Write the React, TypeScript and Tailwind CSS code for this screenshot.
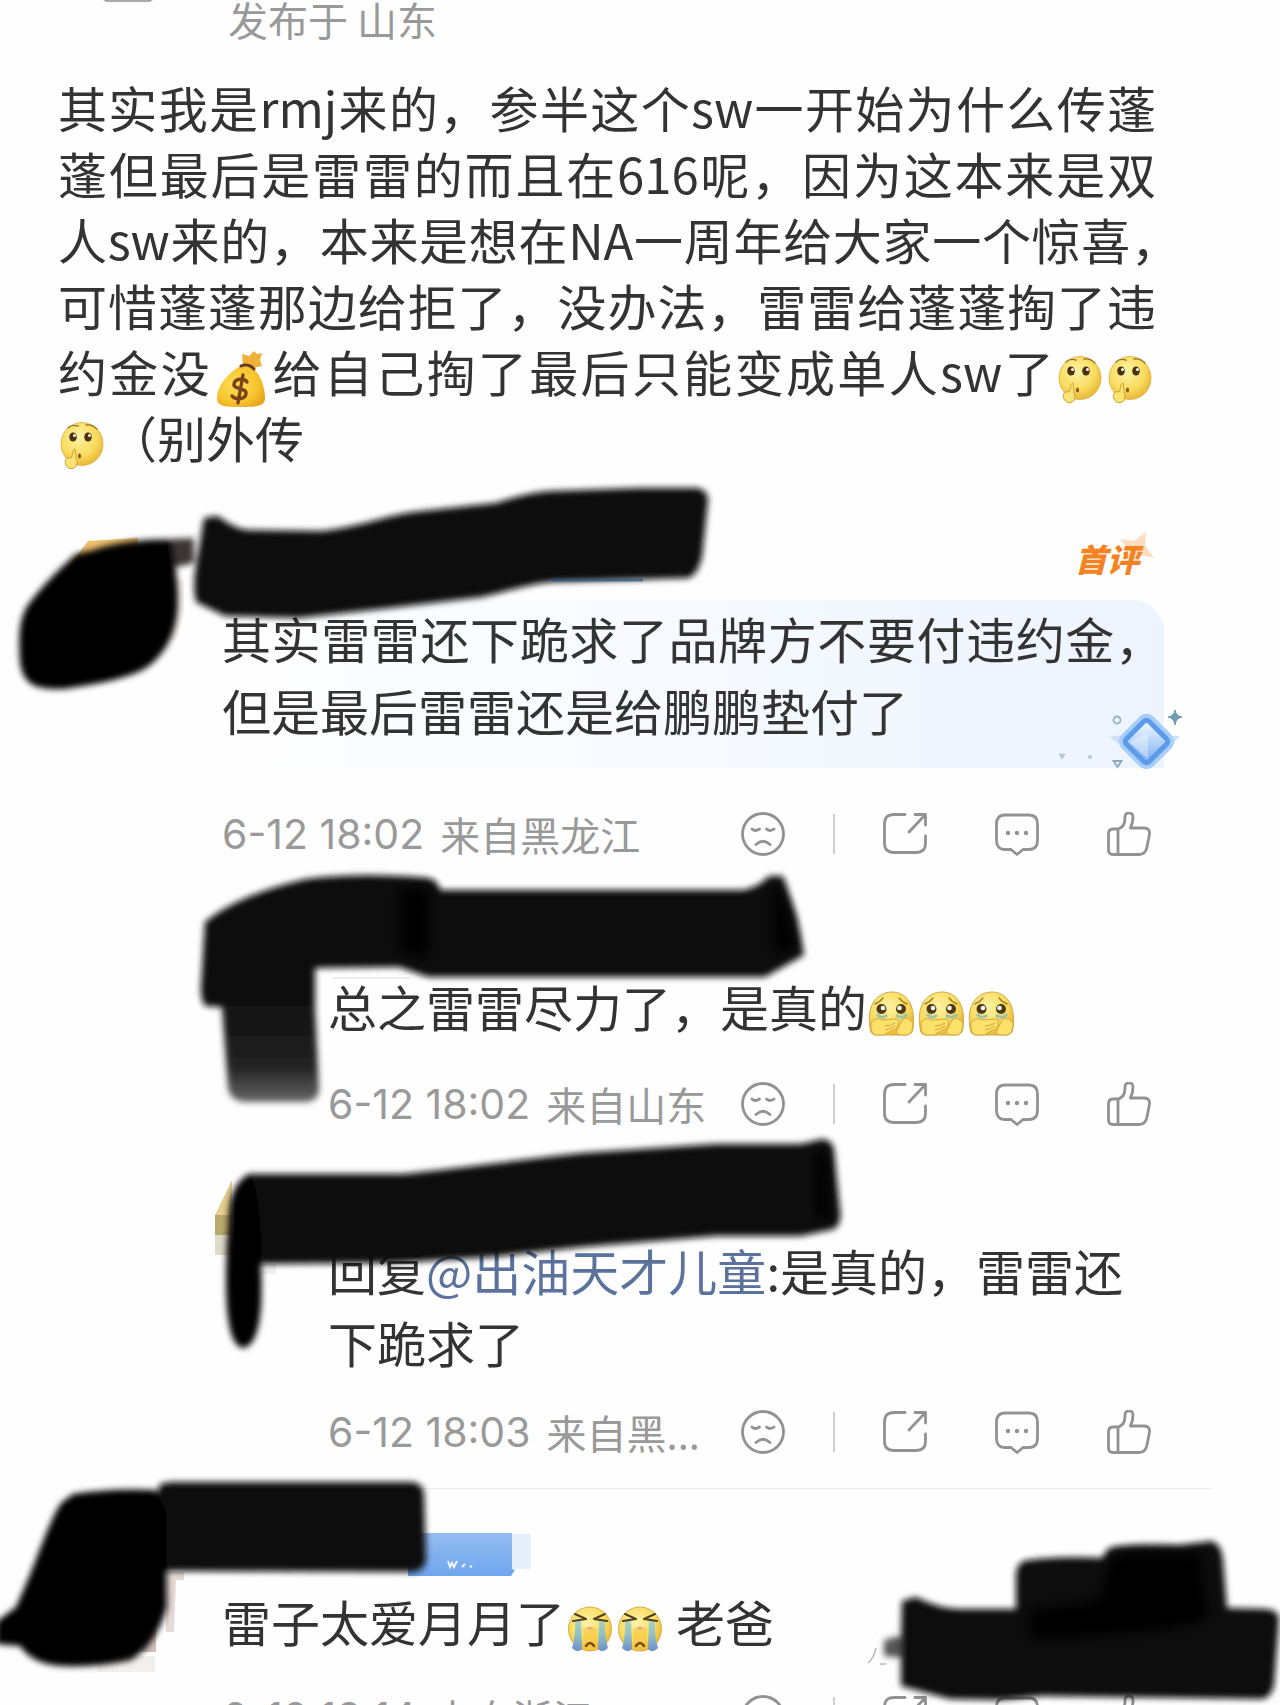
import React from 'react';

function MoneyBag() {
  return (
    <svg viewBox="0 0 50 60" className="inline-block h-[60px] w-[50px] align-middle" role="img" aria-label="钱袋">
      <defs>
        <radialGradient id="bag" cx="40%" cy="45%" r="65%">
          <stop offset="0" stopColor="#fde05a" />
          <stop offset="0.7" stopColor="#f7c32c" />
          <stop offset="1" stopColor="#e9a41c" />
        </radialGradient>
      </defs>
      <path d="M26 5 L33 7 L38 2 L41 5 L46 4 L44 11 L46 17 L37 19 L27 16 Z" fill="#efb13a" />
      <path d="M25 17 C14 22 1 36 1 49 C1 57 8 58 24 58 C42 58 49 57 49 49 C49 38 44 25 37 19 Z" fill="url(#bag)" />
      <path d="M25 17 C29 15 35 16 38 20" stroke="#6b3a1b" strokeWidth="3" fill="none" strokeLinecap="round" />
      <path d="M31 33 C29 29 19 29 18 35 C17 41 31 38 30 45 C29 51 19 51 16 47 M27 26 L22 54" stroke="#7b4417" strokeWidth="3.4" fill="none" strokeLinecap="round" />
    </svg>
  );
}

function FaceDefs() {
  return (
    <defs>
      <radialGradient id="face" cx="42%" cy="35%" r="65%">
        <stop offset="0" stopColor="#fdf3a8" />
        <stop offset="0.65" stopColor="#f9dc5e" />
        <stop offset="1" stopColor="#eab83a" />
      </radialGradient>
      <linearGradient id="tear" x1="0" y1="0" x2="0" y2="1">
        <stop offset="0" stopColor="#a9d5c4" />
        <stop offset="0.5" stopColor="#8fbfc4" />
        <stop offset="1" stopColor="#6f8fc8" />
      </linearGradient>
    </defs>
  );
}

function Hush() {
  return (
    <svg viewBox="0 0 50 50" className="inline-block size-[50px] align-middle" role="img" aria-label="思考">
      <FaceDefs />
      <ellipse cx="24" cy="24" rx="21" ry="21.500" fill="url(#face)" stroke="#d9ad3c" strokeWidth="0.8" />
      <path d="M10 8 Q14 4 20 6 M28 5 Q34 4 39 9" stroke="#9a7426" strokeWidth="1.4" fill="none" strokeLinecap="round" />
      <ellipse cx="15" cy="17" rx="3.800" ry="4.600" fill="#4d3010" />
      <ellipse cx="30" cy="17" rx="3.800" ry="4.600" fill="#4d3010" />
      <circle cx="16.500" cy="15.400" r="1.500" fill="#fff" />
      <circle cx="31.500" cy="15.400" r="1.500" fill="#fff" />
      <ellipse cx="21.500" cy="36" rx="1.600" ry="2.600" fill="#8c5a1a" />
      <path d="M17 29 C14 29 15 36 13 38 C8 37 6 40 8 45 C10 50 18 50 19 44 C20 41 17 39 18 36 Z" fill="#fbe373" stroke="#cf9f37" strokeWidth="1" />
    </svg>
  );
}

function Moved() {
  return (
    <svg viewBox="0 0 50 50" className="inline-block size-[50px] align-middle" role="img" aria-label="感动">
      <FaceDefs />
      <path d="M3 38 C-1 14 12 3 25 3 C38 3 49 14 46 38 C46 44 43 46 38 46 L9 46 C5 46 3 43 3 38 Z" fill="url(#face)" stroke="#c9ac4c" strokeWidth="1" />
      <path d="M8 15 Q13 13 16 9 M32 9 Q35 13 40 15" stroke="#a57b22" strokeWidth="1.4" fill="none" strokeLinecap="round" />
      <path d="M10 25 Q15 31 20 26 M29 26 Q35 31 40 25" stroke="#9cc3a8" strokeWidth="3" fill="none" />
      <circle cx="14.500" cy="20" r="5" fill="#4f3912" />
      <circle cx="34" cy="20" r="5" fill="#4f3912" />
      <circle cx="16" cy="19" r="2.300" fill="#fff" />
      <circle cx="32.500" cy="19" r="2.300" fill="#fff" />
      <path d="M4 34 Q9 27 15 31 L27 30 Q34 30 31 34 Q32 39 26 41 L17 46 L9 46 Q3 45 4 34 Z" fill="#fbe06a" stroke="#d6a63a" strokeWidth="1" />
      <path d="M46 34 Q40 26 35 31 L30 41 Q27 45 34 46 L40 46 Q46 45 46 34 Z" fill="#fbe06a" stroke="#d6a63a" strokeWidth="1" />
      <path d="M18 37 Q24 37 28 34 M18 41 Q24 40 28 37" stroke="#d6a63a" strokeWidth="1" fill="none" />
    </svg>
  );
}

function Crying() {
  return (
    <svg viewBox="0 0 50 50" className="inline-block size-[50px] align-middle" role="img" aria-label="大哭">
      <FaceDefs />
      <ellipse cx="25" cy="25" rx="21.500" ry="22" fill="url(#face)" stroke="#d0b04a" strokeWidth="1" />
      <path d="M18 24 H32 V46 H18 Z" fill="#f7c53c" opacity="0.6" />
      <path d="M10 16 H16 L17 45 Q12 50 7 44 Q11 30 10 16 Z" fill="url(#tear)" />
      <path d="M34 16 H40 Q39 30 43 44 Q38 50 33 45 Z" fill="url(#tear)" />
      <path d="M10 10 L21 15 M8 17 L21 15 M40 10 L29 15 M42 17 L29 15" stroke="#50421f" strokeWidth="2" fill="none" strokeLinecap="round" />
      <ellipse cx="25" cy="24" rx="3" ry="1.600" fill="#e9a98a" />
      <path d="M21 42 Q25 36 29 42" stroke="#7b4a16" strokeWidth="2.600" fill="none" strokeLinecap="round" />
    </svg>
  );
}

const icon = 'block size-11';
const stroke = { fill: 'none', stroke: '#929292', strokeWidth: 2.8, strokeLinecap: 'round', strokeLinejoin: 'round' } as const;

function Actions() {
  return (
    <div className="flex shrink-0 items-center">
      <button type="button" aria-label="表情">
        <svg viewBox="0 0 44 44" className={icon} {...stroke}>
          <circle cx="22" cy="22" r="20.500" />
          <path d="M11 17 Q14 20 18.500 17 M25.500 17 Q29 20 33 17 M15 32.500 Q22 26 29 32.500" />
        </svg>
      </button>
      <span className="mx-12 h-10 w-[2px] bg-[#cfcfcf]" />
      <button type="button" aria-label="转发" className="mr-[68px]">
        <svg viewBox="0 0 44 44" className={icon} {...stroke}>
          <path d="M22 2.500 H11 Q1.500 2.500 1.500 12 V31 Q1.500 40.500 11 40.500 H33 Q42.500 40.500 42.500 31 V24" />
          <path d="M32 2.500 H42.500 V13 M42 3 L26 20" />
        </svg>
      </button>
      <button type="button" aria-label="评论" className="mr-[68px]">
        <svg viewBox="0 0 44 44" className={icon} {...stroke}>
          <path d="M10 3 H34 Q42.500 3 42.500 12 V28 Q42.500 37.500 34 37.500 H28 L22 42.500 L16 37.500 H10 Q1.500 37.500 1.500 28 V12 Q1.500 3 10 3 Z" />
          <path d="M13 21 h.01 M22 21 h.01 M31 21 h.01" strokeWidth="4.400" />
        </svg>
      </button>
      <button type="button" aria-label="点赞">
        <svg viewBox="0 0 44 44" className={icon} {...stroke}>
          <path d="M11 17 C17 15 18 11 18 5 C18 -0.500 26 -0.500 26 5 C26 9 25 13 23.500 16 H37 Q43 16 42.500 22 L40 35 Q38.500 42.500 32 42.500 H6 Q1.500 42.500 1.500 38 V22 Q1.500 17 6 17 Z M11 17 V42.500" />
        </svg>
      </button>
    </div>
  );
}

function Meta({ time, place, className }: { time: string; place: string; className: string }) {
  return (
    <div className={`flex h-11 items-center justify-between pr-[13px] text-[40px] leading-[42px] text-[#999] ${className}`}>
      <div className="flex items-center gap-4 whitespace-nowrap">
        <time className="font-[Inter,sans-serif] text-[41px]">{time}</time>
        <span>{place}</span>
      </div>
      <Actions />
    </div>
  );
}

function Gem() {
  return (
    <svg viewBox="0 0 130 64" className="absolute -right-4 bottom-0 h-16 w-[130px] overflow-visible" aria-hidden="true">
      <defs>
        <linearGradient id="gem" x1="0" y1="0" x2="1" y2="1">
          <stop offset="0" stopColor="#f1f7ff" />
          <stop offset="1" stopColor="#7db2f4" />
        </linearGradient>
      </defs>
      <path d="M60 33 Q74 28 84 40 Q70 44 60 33 Z M130 32 Q118 30 108 40 Q122 44 130 32 Z" fill="#cfe0fb" />
      <rect x="74" y="15" width="45" height="45" rx="10" transform="rotate(45 96.500 37.500)" fill="#a9cdf9" />
      <rect x="78" y="19" width="37" height="37" rx="6" transform="rotate(45 96.500 37.500)" fill="#5b9bea" />
      <rect x="83" y="24" width="27" height="27" rx="1" transform="rotate(45 96.500 37.500)" fill="url(#gem)" />
      <path d="M80 38 L98 28 L98 55 Z" fill="#fff" opacity="0.35" />
      <circle cx="67" cy="16" r="3.500" fill="none" stroke="#8fb4c8" strokeWidth="1.800" />
      <path d="M125 6 Q126 12 132 13 Q126 14 125 21 Q124 14 118 13 Q124 12 125 6 Z" fill="#6f9cb4" stroke="#6f9cb4" strokeWidth="1" />
      <path d="M63.500 57 H71.500 L67.500 63 Z" fill="none" stroke="#86a9bb" strokeWidth="1.800" />
      <path d="M9 50 H15 L12 55 Z" fill="#b5cad6" stroke="#b5cad6" />
      <circle cx="40" cy="53" r="2" fill="#b5cad6" />
    </svg>
  );
}

/* Brush strokes that hide the account names and avatars. */
function Redactions() {
  return (
    <svg viewBox="0 0 1280 1705" className="pointer-events-none absolute top-0 left-0 h-[1705px] w-[1280px]" aria-hidden="true">
      <defs>
        <filter id="soft" x="-5%" y="-5%" width="110%" height="110%">
          <feGaussianBlur stdDeviation="3" />
        </filter>
        <filter id="softer" x="-20%" y="-20%" width="140%" height="140%">
          <feGaussianBlur stdDeviation="6" />
        </filter>
        <linearGradient id="tail" x1="0" y1="0" x2="0" y2="1">
          <stop offset="0" stopColor="#050505" />
          <stop offset="0.75" stopColor="#222" />
          <stop offset="1" stopColor="#666" />
        </linearGradient>
        <linearGradient id="tag" x1="0" y1="0" x2="0" y2="1">
          <stop offset="0" stopColor="#95bcf0" />
          <stop offset="1" stopColor="#6fa5ee" />
        </linearGradient>
      </defs>

      <path d="M103 0 H153 L150 2 H106 Z" fill="#aaa" />

      <path d="M66 570 L88 541 L138 538 L135 556 Z" fill="#efc170" />
      <path d="M172 580 H184 V612 L176 640 H170 Z" fill="#f6f1ec" />
      <g filter="url(#soft)">
        <path d="M170 539 L194 538 L194 563 L172 568 Z" fill="#3a3436" />
        <path d="M76 554 C56 572 40 588 28 605 C18 620 19 640 20 662 C23 684 34 690 64 689 C90 685 108 682 124 677 C146 671 156 662 166 647 C178 628 180 605 176 572 L172 540 C145 538 110 544 94 550 Z" fill="#000" />
        <path d="M204 518 L218 516 Q236 530 250 530 L321 531 C360 527 380 517 413 512 L496 503 Q530 492 551 491 L640 488 L697 488 Q708 490 708 500 L702 557 Q698 574 689 578 L551 582 C525 585 505 592 482 597 L390 608 L298 618 L225 616 L196 602 Q193 590 195 572 Z" fill="#0d0d0d" />
      </g>
      <path d="M551 580 H643" stroke="#1c4f8a" strokeWidth="3" opacity="0.6" />

      <path d="M333 978 H410" stroke="#ddd" strokeWidth="1" />
      <g filter="url(#soft)">
        <path d="M222 960 H315 V1007 L319 1090 Q318 1101 306 1102 L243 1102 Q230 1100 228 1088 L222 1007 Z" fill="url(#tail)" />
        <path d="M205 922 Q240 894 306 879 Q360 872 428 878 Q438 880 440 890 L744 890 Q760 886 769 876 L783 876 L797 917 L804 955 L765 977 L428 977 L399 967 L315 968 L300 985 L222 1007 L205 1006 Q200 998 201 985 Z" fill="#0f0f0f" />
      </g>
      <g filter="url(#softer)">
        <path d="M400 888 H430 L428 960 L400 950 Z M772 890 L780 888 L796 945 L775 955 Z" fill="#000" />
      </g>

      <path d="M215 1215 L232 1180 V1215 Z" fill="#e5cf91" />
      <path d="M215 1215 H232 V1235 H215 Z" fill="#b8a96c" />
      <path d="M215 1235 H232 V1255 H215 Z" fill="#dfdbc9" />
      <path d="M262 1264 H276 V1274 H262 Z" fill="#eee" />
      <g filter="url(#soft)">
        <path d="M249 1174 L403 1174 C450 1169 520 1160 582 1153 L716 1144 L801 1144 L823 1139 Q833 1141 834 1150 L840 1210 Q842 1224 834 1229 L801 1236 L716 1236 L582 1247 L493 1257 L394 1263 L262 1264 L229 1230 Q226 1186 249 1174 Z" fill="#101010" />
        <path d="M249 1174 Q262 1190 261 1265 Q265 1345 243 1348 Q226 1346 226 1280 Q226 1186 249 1174 Z" fill="#000" />
      </g>
      <path d="M815 1152 L826 1150 L830 1215 L815 1222 Z" fill="#000" filter="url(#softer)" />

      <path d="M166 1572 H184 V1580 H176 L174 1632 H166 Z" fill="#e6dad6" />
      <path d="M150 1630 H156 V1652 H140 Z" fill="#cfc0bc" />
      <path d="M97 1656 H155 V1672 H97 Z" fill="#f3efec" />
      <path d="M512 1534 H531 V1569 H512 Z" fill="#e6eefb" />
      <path d="M408 1533 H512 V1569 L515 1570 L511 1576 H408 Z" fill="url(#tag)" />
      <path d="M448 1561 l2 6 2-4 2 4 3-6 M462 1567 l3-3 M470 1567 l2-1" stroke="#eef5ff" strokeWidth="2" fill="none" />
      <g filter="url(#soft)">
        <path d="M157 1494 L160 1484 L171 1482 L412 1482 Q423 1483 424 1494 L426 1562 Q422 1572 412 1572 L160 1571 Z" fill="#0f0f0f" />
        <path d="M73 1494 Q110 1488 155 1490 L166 1510 L167 1607 Q156 1645 131 1660 Q95 1668 61 1666 Q32 1664 20 1646 L-4 1644 L-4 1622 L16 1607 L29 1577 C42 1545 50 1520 61 1503 Z" fill="#000" />
      </g>

      <path d="M876 1648 Q874 1658 868 1663 M880 1664 H886" stroke="#bbb" strokeWidth="1.500" fill="none" />
      <g filter="url(#soft)">
        <path d="M884 1640 L904 1635 V1658 L884 1656 Z" fill="#555" />
        <path d="M902 1601 L916 1597 Q940 1609 959 1609 L1016 1609 L1016 1577 Q1016 1560 1030 1560 Q1060 1556 1102 1558 L1108 1549 Q1118 1543 1180 1545 L1212 1541 Q1222 1545 1223 1560 L1227 1608 L1266 1609 Q1279 1610 1279 1620 L1274 1685 Q1271 1698 1262 1699 L1111 1697 L1042 1696 L1001 1700 L950 1699 L901 1686 V1640 Z" fill="#101010" />
      </g>
      <path d="M1030 1610 L1102 1600 Q1106 1556 1120 1554 L1200 1554 L1208 1620 Q1150 1636 1030 1640 Z" fill="#000" filter="url(#softer)" />
    </svg>
  );
}

const fullLine = 'block whitespace-nowrap [text-align-last:justify]';

export default function App() {
  return (
    <main lang="zh-CN" className="relative h-screen overflow-hidden bg-[#fefefe] pr-[116px] pl-[58px] font-['Noto_Sans_CJK_SC',sans-serif] text-[49px] text-[#333]">
      <article>
        <p className="pl-[170px] text-[40px] leading-[38px] text-[#999]">发布于 山东</p>
        <p className="mt-9 mr-2 leading-[66px]">
          <span className={fullLine}>其实我是rmj来的，参半这个sw一开始为什么传蓬</span>
          <span className={fullLine}>蓬但最后是雷雷的而且在616呢，因为这本来是双</span>
          <span className={`${fullLine} -mr-6`}>人sw来的，本来是想在NA一周年给大家一个惊喜，</span>
          <span className={fullLine}>可惜蓬蓬那边给拒了，没办法，雷雷给蓬蓬掏了违</span>
          <span className={fullLine}>
            约金没<span className="mx-1 inline-flex h-[50px] items-center align-middle"><MoneyBag /></span>给自己掏了最后只能变成单人sw了<Hush /><Hush />
          </span>
          <Hush />（别外传
        </p>
      </article>

      <section className="pl-[164px]">
        <div className="relative mt-[2px] flex h-32 items-center justify-end pt-11 pr-[25px]">
          <svg viewBox="0 0 40 40" className="absolute top-14 right-2 size-10" aria-hidden="true">
            <path d="M30 4 L29 17 L38 30 L24 27 L12 36 L13 22 L4 11 L18 13 Z" fill="#fbdcc0" />
          </svg>
          <strong className="relative text-[32px] leading-10 font-black text-[#f58220] italic">首评</strong>
        </div>
        <div className="relative rounded-tr-[32px] bg-gradient-to-r from-[#fefefe] via-[#f6f9ff] to-[#edf4fe] pt-[2px] pb-[22px]">
          <p className="leading-[72px]">
            <span className={fullLine}>其实雷雷还下跪求了品牌方不要付违约金，</span>
            但是最后雷雷还是给鹏鹏垫付了
          </p>
          <Gem />
        </div>
        <Meta time="6-12 18:02" place="来自黑龙江" className="mt-11" />

        <div className="mt-[114px] pl-[106px]">
          <p className="leading-[72px]">总之雷雷尽力了，是真的<Moved /><Moved /><Moved /></p>
          <Meta time="6-12 18:02" place="来自山东" className="mt-10" />
        </div>

        <div className="mt-[108px] pl-[106px]">
          <p className="leading-[72px]">
            回复<a href="#user" className="text-[#5b729d]">@出油天才儿童</a>:是真的，雷雷还下跪求了
          </p>
          <Meta time="6-12 18:03" place="来自黑..." className="mt-8" />
        </div>
      </section>

      <section className="pl-[164px]">
        <hr className="mt-[34px] -mr-12 border-[#ebebeb]" />
        <p className="mt-24 leading-[72px]">雷子太爱月月了<Crying /><Crying /> 老爸</p>
        <Meta time="6-12 18:14" place="来自浙江" className="mt-[38px]" />
      </section>

      <Redactions />
    </main>
  );
}
